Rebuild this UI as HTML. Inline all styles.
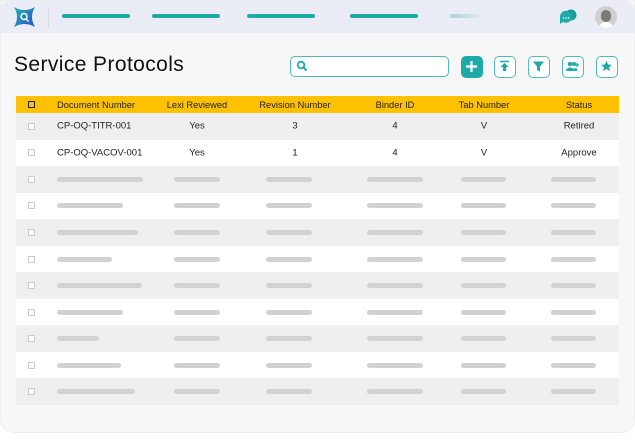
<!DOCTYPE html>
<html><head><style>
*{margin:0;padding:0;box-sizing:border-box}
body{width:635px;height:442px;background:#fff;font-family:"Liberation Sans",sans-serif;position:relative;overflow:hidden}
.card{position:absolute;left:0;top:0;width:635px;height:433px;background:#f7f7f7;border-radius:0 0 14px 14px;border:1px solid #eee}
.top{position:absolute;left:0;top:0;width:635px;height:33px;background:#eaedf5;border-radius:12px 12px 0 0}
.nav{position:absolute;top:14px;height:4px;border-radius:2px;background:#1eaaa8}
h1{position:absolute;left:14px;top:53px;font-size:21px;font-weight:normal;color:#111;letter-spacing:0.4px}
.search{position:absolute;left:290px;top:56px;width:159px;height:21px;border:1.5px solid #4dbcb9;border-radius:5px;background:#fff}
.btn{position:absolute;top:56px;width:22px;height:22px;border:1.5px solid #4dbcb9;border-radius:5px;background:#fff}
.tbl{position:absolute;left:16px;top:96px;width:603px}
.hd{height:17px;background:#fec100;position:relative;font-size:9.3px;color:#222}
.row{height:26.55px;position:relative;font-size:9.5px;color:#222}
.row:nth-child(odd){background:#efefef}
.row:nth-child(even){background:#fff}
.t{position:absolute;top:50%;transform:translate(-50%,-50%);white-space:nowrap}
.l{position:absolute;top:50%;transform:translateY(-50%);white-space:nowrap}
.cb{position:absolute;left:12px;top:50%;margin-top:-3.5px;width:7px;height:7px;border:1px solid #ccc;background:#fff}
.bar{position:absolute;top:50%;margin-top:-2.5px;height:5px;border-radius:3px;background:#d2d2d2}
</style></head><body>
<div class="card"></div>
<div class="top">
 <svg style="position:absolute;left:13px;top:6px" width="23" height="22" viewBox="0 0 23 22"><defs><linearGradient id="g" x1="0" y1="0" x2="1" y2="1"><stop offset="0" stop-color="#1fb5b0"/><stop offset="1" stop-color="#2a4fc9"/></linearGradient></defs><path d="M1 1 Q6 4 11.5 4 Q17 4 22 1 Q19 6 19 11 Q19 16 22 21 Q17 18 11.5 18 Q6 18 1 21 Q4 16 4 11 Q4 6 1 1Z" fill="url(#g)"/><circle cx="11" cy="10.5" r="3" fill="none" stroke="#fff" stroke-width="1.5"/><path d="M13 13l2.5 2.5" stroke="#fff" stroke-width="1.5"/></svg>
 <div style="position:absolute;left:48px;top:7px;width:1px;height:20px;background:#d5d8e0"></div>
 <div class="nav" style="left:62px;width:68px"></div>
 <div class="nav" style="left:152px;width:68px"></div>
 <div class="nav" style="left:247px;width:68px"></div>
 <div class="nav" style="left:350px;width:68px"></div>
 <div class="nav" style="left:450px;width:34px;background:linear-gradient(90deg,#9fd8d6,#eaedf5)"></div>
 <svg style="position:absolute;left:559px;top:9px" width="19" height="16" viewBox="0 0 19 16"><circle cx="12" cy="6" r="5.5" fill="#1b9c99"/><path d="M1 8a6 6 0 1 1 3 5l-3 2z" fill="#1eaaa8"/><circle cx="4.5" cy="9" r=".8" fill="#fff"/><circle cx="7" cy="9" r=".8" fill="#fff"/><circle cx="9.5" cy="9" r=".8" fill="#fff"/></svg>
 <div style="position:absolute;left:595px;top:6px;width:22px;height:22px;border-radius:50%;background:#d0d0d0;overflow:hidden"><div style="position:absolute;left:6px;top:4px;width:10px;height:12px;border-radius:5px;background:#7a7a7a"></div><div style="position:absolute;left:3px;top:16px;width:16px;height:10px;border-radius:8px 8px 0 0;background:#fff"></div></div>
</div>
<h1>Service Protocols</h1>
<div class="search"><svg style="position:absolute;left:5px;top:3px" width="12" height="12" viewBox="0 0 12 12"><circle cx="5" cy="5" r="3.3" fill="none" stroke="#1eaaa8" stroke-width="1.8"/><path d="M7.5 7.5l3 3" stroke="#1eaaa8" stroke-width="2"/></svg></div>
<div class="btn" style="left:461px;background:#1eaaa8;border-color:#1eaaa8"><svg width="19" height="19" viewBox="0 0 19 19"><path d="M9.5 4v11M4 9.5h11" stroke="#fff" stroke-width="2.2"/></svg></div>
<div class="btn" style="left:494px"><svg width="19" height="19" viewBox="0 0 19 19"><path d="M5 4.5h9" stroke="#1eaaa8" stroke-width="1.5"/><path d="M9.5 6l-4 4h2.5v4h3v-4h2.5z" fill="#1eaaa8"/></svg></div>
<div class="btn" style="left:528px"><svg width="19" height="19" viewBox="0 0 19 19"><path d="M4 4.5h11l-4 5v5l-3-1.5v-3.5z" fill="#1eaaa8"/></svg></div>
<div class="btn" style="left:562px"><svg width="19" height="19" viewBox="0 0 19 19"><circle cx="7" cy="7" r="2.3" fill="#1eaaa8"/><circle cx="11" cy="7" r="2" fill="#1eaaa8"/><path d="M3 14a4 3.5 0 0 1 8 0z M9 14a3.5 3 0 0 1 5 -2.5v2.5z" fill="#1eaaa8"/><path d="M14 6v4M12 8h4" stroke="#1eaaa8" stroke-width="1.2"/></svg></div>
<div class="btn" style="left:596px"><svg width="19" height="19" viewBox="0 0 19 19"><path d="M9.5 4l1.6 3.5 3.8.4-2.9 2.5.9 3.7-3.4-2-3.4 2 .9-3.7-2.9-2.5 3.8-.4z" fill="#1eaaa8"/></svg></div>

<div class="tbl">
 <div class="hd"><div style="position:absolute;left:12px;top:5px;width:7px;height:7px;border:1.2px solid #222"></div>
  <span class="l" style="left:41px">Document Number</span><span class="t" style="left:181px">Lexi Reviewed</span><span class="t" style="left:279px">Revision Number</span><span class="t" style="left:379px">Binder ID</span><span class="t" style="left:468px">Tab Number</span><span class="t" style="left:563px">Status</span></div>
 <div>
 <div class="row"><div class="cb"></div><span class="l" style="left:41px">CP-OQ-TITR-001</span><span class="t" style="left:181px">Yes</span><span class="t" style="left:279px">3</span><span class="t" style="left:379px">4</span><span class="t" style="left:468px">V</span><span class="t" style="left:563px">Retired</span></div>
 <div class="row"><div class="cb"></div><span class="l" style="left:41px">CP-OQ-VACOV-001</span><span class="t" style="left:181px">Yes</span><span class="t" style="left:279px">1</span><span class="t" style="left:379px">4</span><span class="t" style="left:468px">V</span><span class="t" style="left:563px">Approve</span></div>
 <div class="row"><div class="cb"></div><div class="bar" style="left:41px;width:86px"></div><div class="bar" style="left:158px;width:46px"></div><div class="bar" style="left:250px;width:46px"></div><div class="bar" style="left:351px;width:56px"></div><div class="bar" style="left:445px;width:45px"></div><div class="bar" style="left:535px;width:45px"></div></div>
 <div class="row"><div class="cb"></div><div class="bar" style="left:41px;width:66px"></div><div class="bar" style="left:158px;width:46px"></div><div class="bar" style="left:250px;width:46px"></div><div class="bar" style="left:351px;width:56px"></div><div class="bar" style="left:445px;width:45px"></div><div class="bar" style="left:535px;width:45px"></div></div>
 <div class="row"><div class="cb"></div><div class="bar" style="left:41px;width:81px"></div><div class="bar" style="left:158px;width:46px"></div><div class="bar" style="left:250px;width:46px"></div><div class="bar" style="left:351px;width:56px"></div><div class="bar" style="left:445px;width:45px"></div><div class="bar" style="left:535px;width:45px"></div></div>
 <div class="row"><div class="cb"></div><div class="bar" style="left:41px;width:55px"></div><div class="bar" style="left:158px;width:46px"></div><div class="bar" style="left:250px;width:46px"></div><div class="bar" style="left:351px;width:56px"></div><div class="bar" style="left:445px;width:45px"></div><div class="bar" style="left:535px;width:45px"></div></div>
 <div class="row"><div class="cb"></div><div class="bar" style="left:41px;width:85px"></div><div class="bar" style="left:158px;width:46px"></div><div class="bar" style="left:250px;width:46px"></div><div class="bar" style="left:351px;width:56px"></div><div class="bar" style="left:445px;width:45px"></div><div class="bar" style="left:535px;width:45px"></div></div>
 <div class="row"><div class="cb"></div><div class="bar" style="left:41px;width:66px"></div><div class="bar" style="left:158px;width:46px"></div><div class="bar" style="left:250px;width:46px"></div><div class="bar" style="left:351px;width:56px"></div><div class="bar" style="left:445px;width:45px"></div><div class="bar" style="left:535px;width:45px"></div></div>
 <div class="row"><div class="cb"></div><div class="bar" style="left:41px;width:42px"></div><div class="bar" style="left:158px;width:46px"></div><div class="bar" style="left:250px;width:46px"></div><div class="bar" style="left:351px;width:56px"></div><div class="bar" style="left:445px;width:45px"></div><div class="bar" style="left:535px;width:45px"></div></div>
 <div class="row"><div class="cb"></div><div class="bar" style="left:41px;width:64px"></div><div class="bar" style="left:158px;width:46px"></div><div class="bar" style="left:250px;width:46px"></div><div class="bar" style="left:351px;width:56px"></div><div class="bar" style="left:445px;width:45px"></div><div class="bar" style="left:535px;width:45px"></div></div>
 <div class="row"><div class="cb"></div><div class="bar" style="left:41px;width:78px"></div><div class="bar" style="left:158px;width:46px"></div><div class="bar" style="left:250px;width:46px"></div><div class="bar" style="left:351px;width:56px"></div><div class="bar" style="left:445px;width:45px"></div><div class="bar" style="left:535px;width:45px"></div></div>
 </div>
</div>
</body></html>
